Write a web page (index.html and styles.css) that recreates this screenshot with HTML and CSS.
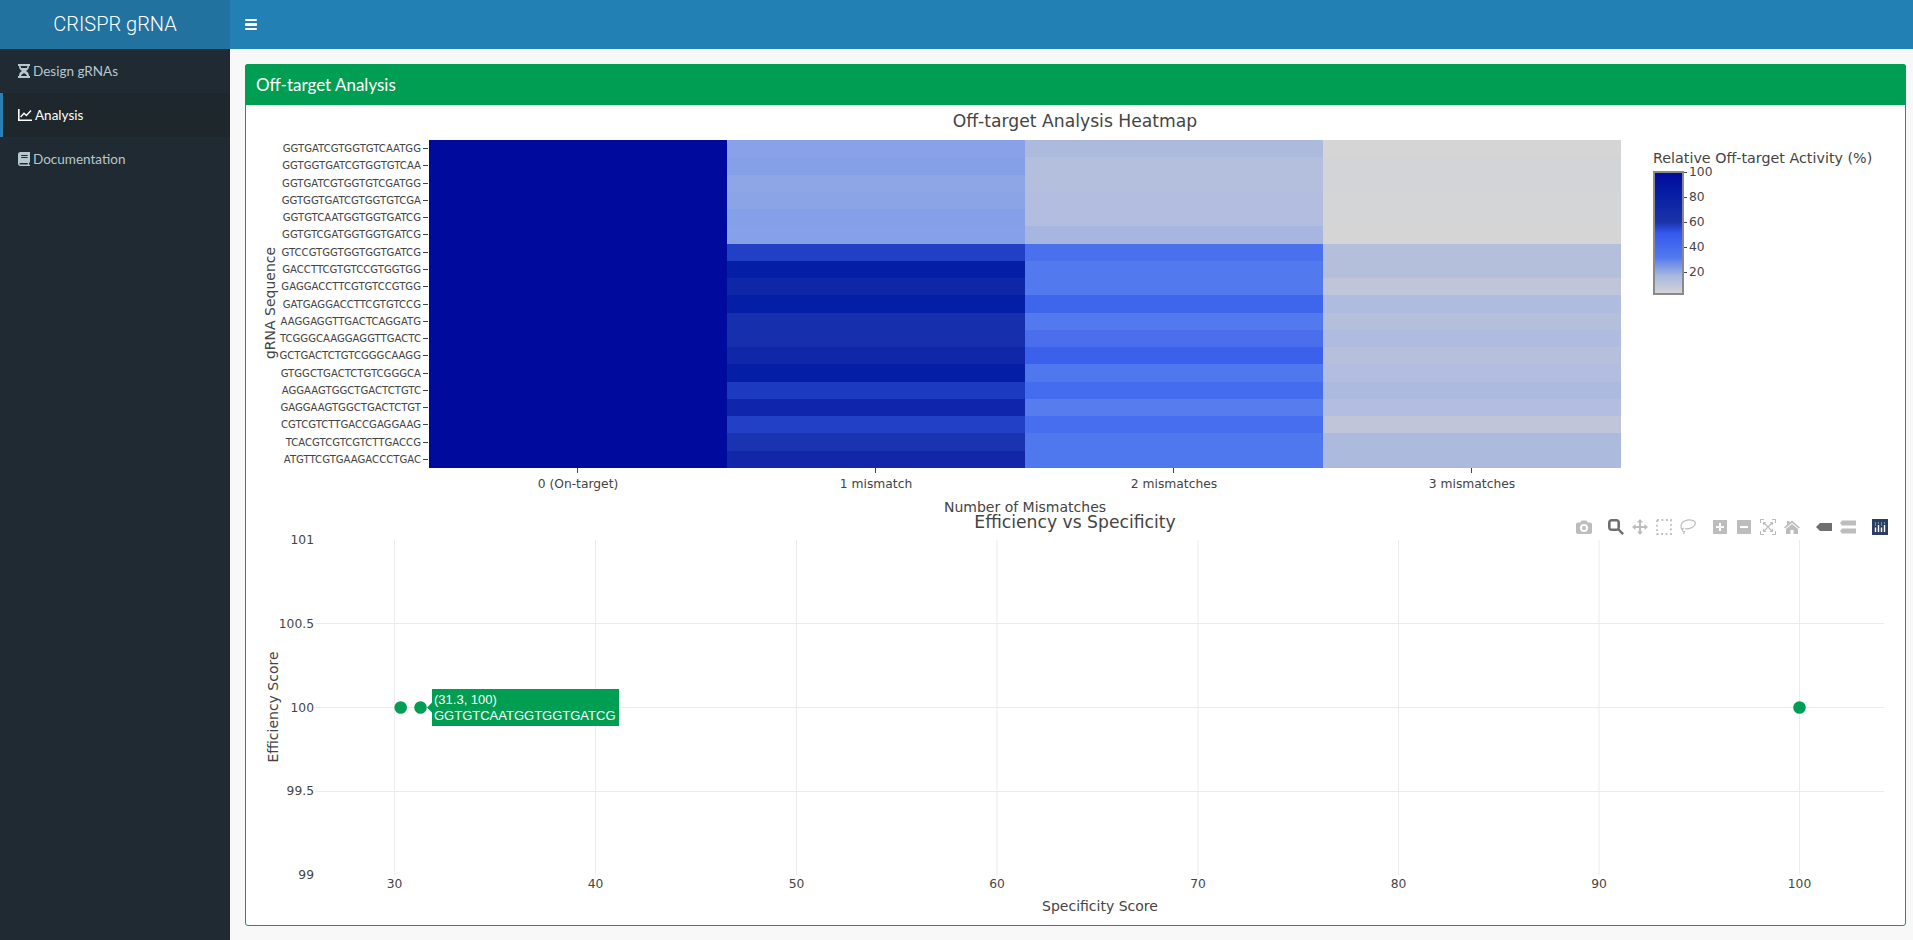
FILE: index.html
```html
<!DOCTYPE html>
<html lang="en">
<head>
<meta charset="utf-8">
<title>CRISPR gRNA</title>
<link rel="stylesheet" href="styles.css">
</head>
<body>
<header class="topbar">
  <a class="logo">CRISPR gRNA</a>
  <nav class="navbar">
    <span class="burger"><i></i><i></i><i></i></span>
  </nav>
</header>
<div class="layout">
  <aside class="sidebar">
    <ul class="menu">
      <li class="menu-item">
        <svg class="menu-icon" viewBox="0 0 12 14"><path d="M0 0H12V2H11C11 5 9.500 6 8 7C9.500 8 11 9 11 12H12V14H0V12H1C1 9 2.500 8 4 7C2.500 6 1 5 1 2H0ZM2.600 2C2.700 3 3 3.600 3.400 4H8.600C9 3.600 9.300 3 9.400 2ZM6 9C4.500 9.800 3.300 10.800 3 12H9C8.700 10.800 7.500 9.800 6 9Z" fill-rule="evenodd"/></svg>
        <span>Design gRNAs</span>
      </li>
      <li class="menu-item active">
        <svg class="menu-icon wide" viewBox="0 0 14 12"><path d="M0 0H1.600V10.400H14V12H0Z"/><path d="M2.600 8L6 4.200L8.400 6.400L13 1.600" class="menu-stroke"/></svg>
        <span>Analysis</span>
      </li>
      <li class="menu-item">
        <svg class="menu-icon" viewBox="0 0 12 14"><path d="M2.400 0H12V10.200L11 10.800V12.600L12 13V14H2.400C1 14 0 13 0 11.600V2.400C0 1 1 0 2.400 0ZM3.200 3V4H9.600V3ZM3.200 5V6H9.600V5ZM2.400 11C1.800 11 1.400 11.300 1.400 11.700S1.800 12.600 2.400 12.600H9.800V11Z" fill-rule="evenodd"/></svg>
        <span>Documentation</span>
      </li>
    </ul>
  </aside>
  <main class="content">
    <section class="box">
      <h3 class="box-header">Off-target Analysis</h3>
      <div class="box-body">
        <div class="chart">
          <svg class="plot" viewBox="246 105 1659 410" width="1659" height="410">
            <defs>
              <linearGradient id="cbar" x1="0" y1="0" x2="0" y2="1">
                <stop offset="0" stop-color="#000a9c"/>
                <stop offset="0.2" stop-color="#0820a5"/>
                <stop offset="0.41" stop-color="#1b33a8"/>
                <stop offset="0.5" stop-color="#3458ee"/>
                <stop offset="0.7" stop-color="#527aee"/>
                <stop offset="0.85" stop-color="#a8b8e0"/>
                <stop offset="1" stop-color="#d5d5d5"/>
              </linearGradient>
            </defs>
            <text class="t-title" x="1075" y="127">Off-target Analysis Heatmap</text>
            <g class="cells">
              <rect x="429" y="140" width="298" height="328" fill="#000a9c"/>
              <rect x="727" y="140" width="298" height="17" fill="#88a1e8"/><rect x="1025" y="140" width="298" height="17" fill="#acbade"/><rect x="1323" y="140" width="298" height="17" fill="#d5d5d5"/>
              <rect x="727" y="157" width="298" height="18" fill="#86a0e8"/><rect x="1025" y="157" width="298" height="18" fill="#b4bfde"/><rect x="1323" y="157" width="298" height="18" fill="#d3d4d8"/>
              <rect x="727" y="175" width="298" height="17" fill="#8ea5e6"/><rect x="1025" y="175" width="298" height="17" fill="#b4bfde"/><rect x="1323" y="175" width="298" height="17" fill="#d3d4d8"/>
              <rect x="727" y="192" width="298" height="17" fill="#8ba4e6"/><rect x="1025" y="192" width="298" height="17" fill="#b2bde0"/><rect x="1323" y="192" width="298" height="17" fill="#d4d5d7"/>
              <rect x="727" y="209" width="298" height="17" fill="#84a0e8"/><rect x="1025" y="209" width="298" height="17" fill="#b2bde0"/><rect x="1323" y="209" width="298" height="17" fill="#d4d5d7"/>
              <rect x="727" y="226" width="298" height="18" fill="#87a1e8"/><rect x="1025" y="226" width="298" height="18" fill="#a6b6e0"/><rect x="1323" y="226" width="298" height="18" fill="#d5d5d5"/>
              <rect x="727" y="244" width="298" height="17" fill="#2240c6"/><rect x="1025" y="244" width="298" height="17" fill="#4a70ee"/><rect x="1323" y="244" width="298" height="17" fill="#b4bfdc"/>
              <rect x="727" y="261" width="298" height="17" fill="#041fa6"/><rect x="1025" y="261" width="298" height="17" fill="#527aee"/><rect x="1323" y="261" width="298" height="17" fill="#b4bfdc"/>
              <rect x="727" y="278" width="298" height="17" fill="#0e27a8"/><rect x="1025" y="278" width="298" height="17" fill="#527aee"/><rect x="1323" y="278" width="298" height="17" fill="#c0c5da"/>
              <rect x="727" y="295" width="298" height="18" fill="#041fa6"/><rect x="1025" y="295" width="298" height="18" fill="#3e66ec"/><rect x="1323" y="295" width="298" height="18" fill="#b0bcdf"/>
              <rect x="727" y="313" width="298" height="17" fill="#162fac"/><rect x="1025" y="313" width="298" height="17" fill="#527aee"/><rect x="1323" y="313" width="298" height="17" fill="#b4bfdc"/>
              <rect x="727" y="330" width="298" height="17" fill="#162fac"/><rect x="1025" y="330" width="298" height="17" fill="#4a6eec"/><rect x="1323" y="330" width="298" height="17" fill="#b0bcdf"/>
              <rect x="727" y="347" width="298" height="17" fill="#0f27a8"/><rect x="1025" y="347" width="298" height="17" fill="#3a60ec"/><rect x="1323" y="347" width="298" height="17" fill="#b6c0dc"/>
              <rect x="727" y="364" width="298" height="18" fill="#041fa6"/><rect x="1025" y="364" width="298" height="18" fill="#5078ee"/><rect x="1323" y="364" width="298" height="18" fill="#b2bddf"/>
              <rect x="727" y="382" width="298" height="17" fill="#1c3abf"/><rect x="1025" y="382" width="298" height="17" fill="#446cee"/><rect x="1323" y="382" width="298" height="17" fill="#acbadf"/>
              <rect x="727" y="399" width="298" height="17" fill="#1026aa"/><rect x="1025" y="399" width="298" height="17" fill="#567cee"/><rect x="1323" y="399" width="298" height="17" fill="#b2bddf"/>
              <rect x="727" y="416" width="298" height="17" fill="#2240c6"/><rect x="1025" y="416" width="298" height="17" fill="#466eee"/><rect x="1323" y="416" width="298" height="17" fill="#c0c5da"/>
              <rect x="727" y="433" width="298" height="18" fill="#1a33b0"/><rect x="1025" y="433" width="298" height="18" fill="#5078ee"/><rect x="1323" y="433" width="298" height="18" fill="#acbade"/>
              <rect x="727" y="451" width="298" height="17" fill="#1126a8"/><rect x="1025" y="451" width="298" height="17" fill="#5078ee"/><rect x="1323" y="451" width="298" height="17" fill="#acbade"/>
            </g>
            <path class="tick" d="M423 148.5h5M423 165.5h5M423 183.5h5M423 200.5h5M423 217.5h5M423 234.5h5M423 252.5h5M423 269.5h5M423 286.5h5M423 304.5h5M423 321.5h5M423 338.5h5M423 355.5h5M423 373.5h5M423 390.5h5M423 407.5h5M423 424.5h5M423 442.5h5M423 459.5h5M577.5 468v5M875.5 468v5M1173.5 468v5M1471.5 468v5M1684 172.5h3M1684 197.5h3M1684 222.5h3M1684 247.5h3M1684 272.5h3"/>
            <g class="t-seq">
              <text x="421" y="152">GGTGATCGTGGTGTCAATGG</text>
              <text x="421" y="169">GGTGGTGATCGTGGTGTCAA</text>
              <text x="421" y="187">GGTGATCGTGGTGTCGATGG</text>
              <text x="421" y="204">GGTGGTGATCGTGGTGTCGA</text>
              <text x="421" y="221">GGTGTCAATGGTGGTGATCG</text>
              <text x="421" y="238">GGTGTCGATGGTGGTGATCG</text>
              <text x="421" y="256">GTCCGTGGTGGTGGTGATCG</text>
              <text x="421" y="273">GACCTTCGTGTCCGTGGTGG</text>
              <text x="421" y="290">GAGGACCTTCGTGTCCGTGG</text>
              <text x="421" y="308">GATGAGGACCTTCGTGTCCG</text>
              <text x="421" y="325">AAGGAGGTTGACTCAGGATG</text>
              <text x="421" y="342">TCGGGCAAGGAGGTTGACTC</text>
              <text x="421" y="359">GCTGACTCTGTCGGGCAAGG</text>
              <text x="421" y="377">GTGGCTGACTCTGTCGGGCA</text>
              <text x="421" y="394">AGGAAGTGGCTGACTCTGTC</text>
              <text x="421" y="411">GAGGAAGTGGCTGACTCTGT</text>
              <text x="421" y="428">CGTCGTCTTGACCGAGGAAG</text>
              <text x="421" y="446">TCACGTCGTCGTCTTGACCG</text>
              <text x="421" y="463">ATGTTCGTGAAGACCCTGAC</text>
            </g>
            <g class="t-mid">
              <text x="578" y="488">0 (On-target)</text>
              <text x="876" y="488">1 mismatch</text>
              <text x="1174" y="488">2 mismatches</text>
              <text x="1472" y="488">3 mismatches</text>
            </g>
            <text class="t-axis" x="1025" y="512">Number of Mismatches</text>
            <text class="t-axis" transform="translate(275 303) rotate(-90)">gRNA Sequence</text>
            <text class="t-cbar-title" x="1653" y="163">Relative Off-target Activity (%)</text>
            <rect class="cbar" x="1654" y="172" width="29" height="122" fill="url(#cbar)"/>
            <g class="t-start">
              <text x="1689" y="176">100</text>
              <text x="1689" y="201">80</text>
              <text x="1689" y="226">60</text>
              <text x="1689" y="251">40</text>
              <text x="1689" y="276">20</text>
            </g>
          </svg>
        </div>
        <div class="chart">
          <svg class="plot" viewBox="246 515 1659 410" width="1659" height="410">
            <text class="t-title" x="1075" y="528">Efficiency vs Specificity</text>
            <path class="grid" d="M394.5 540V875M595.5 540V875M796.5 540V875M997 540V875M1198 540V875M1398.5 540V875M1599 540V875M1799.5 540V875M316 623.5H1884M316 707.5H1884M316 791.5H1884"/>
            <g class="t-end">
              <text x="314" y="544">101</text>
              <text x="314" y="628">100.5</text>
              <text x="314" y="712">100</text>
              <text x="314" y="795">99.5</text>
              <text x="314" y="879">99</text>
            </g>
            <g class="t-mid">
              <text x="394.5" y="888">30</text>
              <text x="595.5" y="888">40</text>
              <text x="796.5" y="888">50</text>
              <text x="997" y="888">60</text>
              <text x="1198" y="888">70</text>
              <text x="1398.5" y="888">80</text>
              <text x="1599" y="888">90</text>
              <text x="1799.5" y="888">100</text>
            </g>
            <text class="t-axis" x="1100" y="911">Specificity Score</text>
            <text class="t-axis" transform="translate(278 707) rotate(-90)">Efficiency Score</text>
            <g class="points">
              <circle cx="400.7" cy="707.5" r="6.3"/>
              <circle cx="420.5" cy="707.5" r="6.3"/>
              <circle cx="1799.5" cy="707.5" r="6.3"/>
            </g>
            <path class="hover-box" d="M427 707.5L432 702.5V689H619V726H432V712.5Z"/>
            <text class="t-hover" x="434" y="704">(31.3, 100)</text>
            <text class="t-hover" x="434" y="720">GGTGTCAATGGTGGTGATCG</text>
          </svg>
          <div class="modebar">
            <div class="mode-group">
              <svg class="mode-btn" viewBox="0 0 16 16"><path fill-rule="evenodd" d="M0 5.200A1.700 1.700 0 0 1 1.700 3.500H4.300L5.500 1.500H10.500L11.700 3.500H14.300A1.700 1.700 0 0 1 16 5.200V13.300A1.700 1.700 0 0 1 14.300 15H1.700A1.700 1.700 0 0 1 0 13.300ZM8 5A4 4 0 1 0 8 13A4 4 0 1 0 8 5ZM8 7A2 2 0 1 1 8 11A2 2 0 1 1 8 7Z"/></svg>
            </div>
            <div class="mode-group">
              <svg class="mode-btn on" viewBox="0 0 16 16"><path fill-rule="evenodd" d="M4 0H8A4 4 0 0 1 12 4V8A4 4 0 0 1 8 12H4A4 4 0 0 1 0 8V4A4 4 0 0 1 4 0ZM3.200 2.600A.6.6 0 0 0 2.600 3.200V8.800A.6.6 0 0 0 3.200 9.400H8.800A.6.6 0 0 0 9.400 8.800V3.200A.6.6 0 0 0 8.800 2.600Z"/><path d="M9.800 11.400L11.400 9.800L16 14.300L14.300 16Z"/></svg>
              <svg class="mode-btn" viewBox="0 0 16 16"><path d="M8 0L11 3.500H9V7H12.500V5L16 8L12.500 11V9H9V12.500H11L8 16L5 12.500H7V9H3.500V11L0 8L3.500 5V7H7V3.500H5Z"/></svg>
              <svg class="mode-btn" viewBox="0 0 16 16"><path class="dotted" d="M1 1H15V15H1Z"/></svg>
              <svg class="mode-btn" viewBox="0 0 16 16"><path class="line" d="M2.500 11C0 8.500.5 3.500 5 1.800S15.800 1.200 15.300 4.500C15 8 9 10.500 5 9.800"/><path class="line" d="M4 9A1.500 1.500 0 1 0 4.500 12.500L3.500 15"/></svg>
            </div>
            <div class="mode-group">
              <svg class="mode-btn" viewBox="0 0 16 16"><path fill-rule="evenodd" d="M1 1H15V15H1ZM7 4V7H4V9H7V12H9V9H12V7H9V4Z"/></svg>
              <svg class="mode-btn" viewBox="0 0 16 16"><path fill-rule="evenodd" d="M1 1H15V15H1ZM4 7V9H12V7Z"/></svg>
              <svg class="mode-btn" viewBox="0 0 16 16"><path class="line" d="M.5 4V.5H4M12 .5H15.500V4M15.500 12V15.500H12M4 15.500H.5V12"/><path class="line" d="M4.500 4.500L11.500 11.500M11.500 4.500L4.500 11.500"/><path d="M3 3H6.500L3 6.500ZM13 3V6.500L9.500 3ZM13 13H9.500L13 9.500ZM3 13V9.500L6.500 13Z"/></svg>
              <svg class="mode-btn" viewBox="0 0 16 16"><path d="M8 1.500L16 8.500L14.800 9.500L8 3.800L1.200 9.500L0 8.500L3 5.800V2H5.500V3.700ZM8 5L14 10V15H9.500V11H6.500V15H2V10Z"/></svg>
            </div>
            <div class="mode-group">
              <svg class="mode-btn on" viewBox="0 0 16 16"><path d="M0 8L4 4H16V12H4Z"/></svg>
              <svg class="mode-btn" viewBox="0 0 16 16"><path d="M0 4L2 1.500H16V6.500H2ZM0 12L2 9.500H16V14.500H2Z"/></svg>
            </div>
            <div class="mode-group">
              <svg class="mode-btn logo-btn" viewBox="0 0 16 16">
                <rect class="logo-bg" width="16" height="16"/>
                <path class="logo-bars" d="M3.500 8.500V13M6.500 6V13M9.500 8.500V13M12.500 6V13"/>
                <path class="logo-dots" d="M3.500 4V4.100M6.500 4V4.100M9.500 4V4.100M12.500 4V4.100M9.500 6V6.100M3.500 6V6.100"/>
              </svg>
            </div>
          </div>
        </div>
      </div>
    </section>
  </main>
</div>
</body>
</html>
```
FILE: styles.css
```css
* { box-sizing: border-box; }
html, body { height: 100%; }
body {
  margin: 0;
  display: flex;
  flex-direction: column;
  overflow: hidden;
  background: #f8f8f8;
  font-family: "Lato", "Noto Sans", sans-serif;
}
.topbar { display: flex; height: 49px; flex: none; }
.logo {
  width: 230px;
  background: #22729f;
  color: #fff;
  font: 300 20px/49px "Roboto", "Liberation Sans", sans-serif;
  text-align: center;
}
.navbar { flex: 1; display: flex; align-items: center; padding-left: 15px; background: #2380b4; }
.burger { display: flex; flex-direction: column; gap: 2px; width: 12px; }
.burger i { display: block; height: 2.500px; background: #fff; border-radius: 1px; }
.layout { flex: 1; display: flex; min-height: 0; }
.sidebar { width: 230px; flex: none; background: #1f2a32; }
.menu { list-style: none; margin: 0; padding: 0; }
.menu-item {
  display: flex;
  align-items: center;
  gap: 3px;
  height: 44px;
  padding: 0 0 1px 18px;
  color: #b8c7ce;
  font-size: 13.5px;
}
.menu-item.active { padding-left: 15px; border-left: 3px solid #2a80b0; background: #1e282c; color: #fff; }
.menu-icon { width: 12px; height: 14px; fill: currentColor; flex: none; }
.menu-icon.wide { width: 14px; height: 12px; }
.menu-stroke { fill: none; stroke: currentColor; stroke-width: 1.400; }
.content { flex: 1; padding: 15px 7px 14px 15px; min-width: 0; }
.box { height: 100%; display: flex; flex-direction: column; border: 1px solid #0d9c5b; border-radius: 3px; background: #fff; }
.box-header {
  margin: -1px -1px 0;
  height: 41px;
  padding-left: 11px;
  background: #009e52;
  color: #fff;
  border-radius: 3px 3px 0 0;
  font-size: 17px;
  font-weight: 400;
  line-height: 41px;
}
.box-body { flex: 1; min-height: 0; }
.chart { position: relative; height: 410px; }
.plot { display: block; overflow: visible; }
.plot text { font-family: "DejaVu Sans", sans-serif; fill: #444; }
.t-title { font-size: 17.200px; text-anchor: middle; }
.t-axis { font-size: 14px; text-anchor: middle; }
.t-cbar-title { font-size: 14.300px; }
.t-seq text { font-size: 10.100px; text-anchor: end; }
.t-mid text { font-size: 12.300px; text-anchor: middle; }
.t-end text { font-size: 12.300px; text-anchor: end; }
.t-start text { font-size: 12.300px; }
.cells { shape-rendering: crispEdges; }
.tick { stroke: #444; stroke-width: 1; fill: none; }
.grid { stroke: #ebebeb; stroke-width: 1; fill: none; }
.cbar { stroke: #8a8a8a; stroke-width: 2; }
.points circle { fill: #009e52; }
.hover-box { fill: #009e52; }
.plot .t-hover { font-family: "Liberation Sans", Arial, sans-serif; font-size: 13px; fill: #fff; }
.modebar { position: absolute; top: 4px; right: 13px; display: flex; gap: 8px; }
.mode-group { display: flex; }
.mode-btn { width: 16px; height: 16px; margin: 0 4px; fill: #bdbdbd; }
.mode-btn.on { fill: #6e6e6e; }
.line { fill: none; stroke: #bdbdbd; stroke-width: 1.200; }
.dotted { fill: none; stroke: #bdbdbd; stroke-width: 1.800; stroke-dasharray: 1.800 2.700; }
.logo-bg { fill: #2b3d63; }
.logo-bars { fill: none; stroke: #fff; stroke-width: 1.400; }
.logo-dots { fill: none; stroke: #6fc7c7; stroke-width: 1.400; stroke-linecap: round; }
```
